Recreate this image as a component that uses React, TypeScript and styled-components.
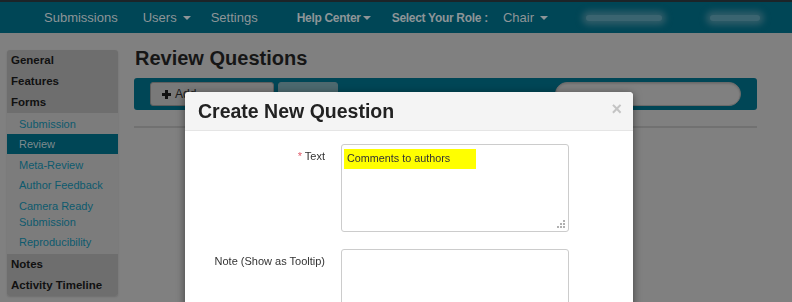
import React from "react";
import { styled, createGlobalStyle } from "styled-components";

// the page sits behind a modal backdrop, so its colours are the dimmed ones
const GlobalStyle = createGlobalStyle`
    html, body {
        margin: 0;
        padding: 0;
        background: #808080;
        font-family: "Liberation Sans", Arial, sans-serif;
        overflow: hidden;
    }
`;

const navItems = [
    { label: "Submissions", caret: false, bold: false, gap: 25 },
    { label: "Users", caret: true, bold: false, gap: 20 },
    { label: "Settings", caret: false, bold: false, gap: 39 },
    { label: "Help Center", caret: true, bold: true, gap: 21, tight: true },
    { label: "Select Your Role :", caret: false, bold: true, gap: 15 },
    { label: "Chair", caret: true, bold: false, gap: 38 },
];

const sideTop = ["General", "Features", "Forms"];
const sideSub = [
    { label: "Submission", active: false },
    { label: "Review", active: true },
    { label: "Meta-Review", active: false },
    { label: "Author Feedback", active: false },
    { label: "Camera Ready Submission", active: false },
    { label: "Reproducibility", active: false },
];
const sideBottom = ["Notes", "Activity Timeline"];

export default function App() {
    return (
        <>
            <GlobalStyle />
            <Page>
                <NavBar>
                    {navItems.map((item) => (
                        <NavItem key={item.label} bold={item.bold} gap={item.gap}>
                            {item.label}
                            {item.caret && <Caret tight={!!item.tight} />}
                        </NavItem>
                    ))}
                    <Smudge width={76} gap={48} />
                    <Smudge width={50} gap={0} />
                </NavBar>
                <Body>
                    <Sidebar>
                        <SideGroup>
                            {sideTop.map((s) => (
                                <SideHeading key={s}>{s}</SideHeading>
                            ))}
                        </SideGroup>
                        <SubGroup>
                            {sideSub.map((s) => (
                                <SideLink key={s.label} active={s.active}>
                                    {s.label}
                                </SideLink>
                            ))}
                        </SubGroup>
                        <SideGroup>
                            {sideBottom.map((s) => (
                                <SideHeading key={s}>{s}</SideHeading>
                            ))}
                        </SideGroup>
                    </Sidebar>
                    <Main>
                        <PageTitle>Review Questions</PageTitle>
                        <Toolbar>
                            <ToolButton width={124}>
                                <PlusIcon />
                                Add
                            </ToolButton>
                            <ToolButton width={60} muted />
                            <SearchBox />
                        </Toolbar>
                        <Rule />
                    </Main>
                </Body>
            </Page>
            <Modal>
                <ModalHeader>
                    <ModalTitle>Create New Question</ModalTitle>
                    <Close>×</Close>
                </ModalHeader>
                <ModalBody>
                    <FormRow>
                        <Label>
                            <Required>*</Required> Text
                        </Label>
                        <TextArea height={88}>
                            <Highlight>Comments to authors</Highlight>
                            <Grip viewBox="0 0 8 8">
                                <rect x="6" y="0" width="2" height="2" />
                                <rect x="3" y="3" width="2" height="2" />
                                <rect x="6" y="3" width="2" height="2" />
                                <rect x="0" y="6" width="2" height="2" />
                                <rect x="3" y="6" width="2" height="2" />
                                <rect x="6" y="6" width="2" height="2" />
                            </Grip>
                        </TextArea>
                    </FormRow>
                    <FormRow>
                        <Label>Note (Show as Tooltip)</Label>
                        <TextArea height={88} />
                    </FormRow>
                </ModalBody>
            </Modal>
        </>
    );
}

const Page = styled.div`
    width: 792px;
    height: 302px;
    background: #808080;
`;

const NavBar = styled.div`
    height: 31px;
    border-top: 2px solid #1c2428;
    background: #004656;
    display: flex;
    align-items: center;
    padding-left: 44px;
`;

const NavItem = styled.div<{ bold: boolean; gap: number }>`
    color: #8e9598;
    font-size: ${(p) => (p.bold ? "12px" : "13px")};
    letter-spacing: ${(p) => (p.bold ? "-0.3px" : "0")};
    font-weight: ${(p) => (p.bold ? 700 : 400)};
    margin-right: ${(p) => p.gap}px;
    display: flex;
    align-items: center;
    white-space: nowrap;
`;

const Caret = styled.span<{ tight: boolean }>`
    display: inline-block;
    margin-left: ${(p) => (p.tight ? "2px" : "6px")};
    width: 0;
    height: 0;
    border-left: 4px solid transparent;
    border-right: 4px solid transparent;
    border-top: 4px solid #8e9598;
`;

// blurred-out account details in the reference
const Smudge = styled.div<{ width: number; gap: number }>`
    width: ${(p) => p.width}px;
    height: 6px;
    margin-right: ${(p) => p.gap}px;
    border-radius: 3px;
    background: #3a6470;
    box-shadow: 0 0 6px 4px #2f5c68;
`;

const Body = styled.div`
    display: flex;
    padding: 17px 0 0 7px;
    gap: 16px;
`;

const Sidebar = styled.div`
    width: 111px;
    height: 246px;
    display: flex;
    flex-direction: column;
    border-radius: 3px;
    overflow: hidden;
    box-shadow: 0 1px 2px rgba(0, 0, 0, 0.15);
`;

const SideGroup = styled.div`
    background: #6e6e6e;
    &:last-child {
        flex: 1;
    }
`;

const SideHeading = styled.div`
    height: 21px;
    line-height: 21px;
    padding-left: 4px;
    font-size: 11.5px;
    font-weight: 700;
    color: #111111;
    white-space: nowrap;
`;

const SubGroup = styled.div`
    background: #7c7c7c;
    padding-bottom: 2px;
`;

const SideLink = styled.div<{ active: boolean }>`
    padding: 2.5px 4px 2px 12px;
    line-height: 16px;
    font-size: 11px;
    color: ${(p) => (p.active ? "#7f8a8d" : "#0d5a6e")};
    background: ${(p) => (p.active ? "#004656" : "transparent")};
`;

const Main = styled.div`
    width: 623px;
    display: flex;
    flex-direction: column;
`;

const PageTitle = styled.div`
    font-size: 20px;
    font-weight: 700;
    color: #161616;
    line-height: 24px;
    margin-top: -4px;
    padding-left: 1px;
`;

const Toolbar = styled.div`
    margin-top: 8px;
    height: 32px;
    background: #004656;
    border-radius: 3px;
    display: flex;
    align-items: center;
    padding: 0 16px;
    gap: 4px;
`;

const ToolButton = styled.div<{ muted?: boolean; width: number }>`
    height: 24px;
    width: ${(p) => p.width}px;
    border: 1px solid ${(p) => (p.muted ? "#4e676d" : "#5e5e5e")};
    border-radius: 3px;
    background: ${(p) => (p.muted ? "#4c696f" : "#797979")};
    display: flex;
    align-items: center;
    padding-left: 11px;
    box-sizing: border-box;
    gap: 4px;
    font-size: 12px;
    color: #1a1a1a;
`;

const PlusIcon = styled.span`
    position: relative;
    width: 9px;
    height: 9px;
    &::before,
    &::after {
        content: "";
        position: absolute;
        background: #111111;
    }
    &::before {
        left: 3px;
        top: 0;
        width: 3px;
        height: 9px;
    }
    &::after {
        left: 0;
        top: 3px;
        width: 9px;
        height: 3px;
    }
`;

const SearchBox = styled.div`
    margin-left: auto;
    width: 186px;
    height: 24px;
    box-sizing: border-box;
    border-radius: 12px;
    border: 1px solid #6a6a6a;
    background: #808080;
    box-shadow: inset 0 1px 2px rgba(0, 0, 0, 0.15);
`;

const Rule = styled.div`
    margin-top: 16px;
    height: 2px;
    background: #717171;
`;

const Modal = styled.div`
    position: fixed;
    left: 185px;
    top: 92px;
    width: 448px;
    height: 260px;
    background: #ffffff;
    border-radius: 4px 4px 0 0;
    box-shadow: 0 2px 8px rgba(0, 0, 0, 0.5);
`;

const ModalHeader = styled.div`
    height: 38px;
    background: #f4f4f4;
    border-bottom: 1px solid #e5e5e5;
    border-radius: 4px 4px 0 0;
    display: flex;
    align-items: center;
    padding: 0 11px 0 13px;
`;

const ModalTitle = styled.div`
    font-size: 19.5px;
    font-weight: 700;
    color: #222222;
    margin-top: 1px;
`;

const Close = styled.div`
    margin-left: auto;
    font-size: 18px;
    font-weight: 700;
    color: #c4c4c4;
    line-height: 18px;
    margin-top: -4px;
`;

const ModalBody = styled.div`
    padding-top: 13px;
    display: flex;
    flex-direction: column;
    gap: 17px;
`;

const FormRow = styled.div`
    display: flex;
    gap: 16px;
`;

const Label = styled.div`
    width: 140px;
    text-align: right;
    font-size: 11px;
    color: #333333;
    padding-top: 6px;
`;

const Required = styled.span`
    color: #e05a6a;
`;

const TextArea = styled.div<{ height: number }>`
    position: relative;
    width: 228px;
    height: ${(p) => p.height}px;
    box-sizing: border-box;
    border: 1px solid #cccccc;
    border-radius: 3px;
    padding: 4px 2px;
`;

const Highlight = styled.div`
    width: 132px;
    height: 20px;
    background: #ffff00;
    font-size: 10.8px;
    line-height: 14px;
    color: #333333;
    padding: 2px 3px;
    box-sizing: border-box;
`;

const Grip = styled.svg`
    position: absolute;
    right: 3px;
    bottom: 3px;
    width: 8px;
    height: 8px;
    fill: #b0b0b0;
`;
